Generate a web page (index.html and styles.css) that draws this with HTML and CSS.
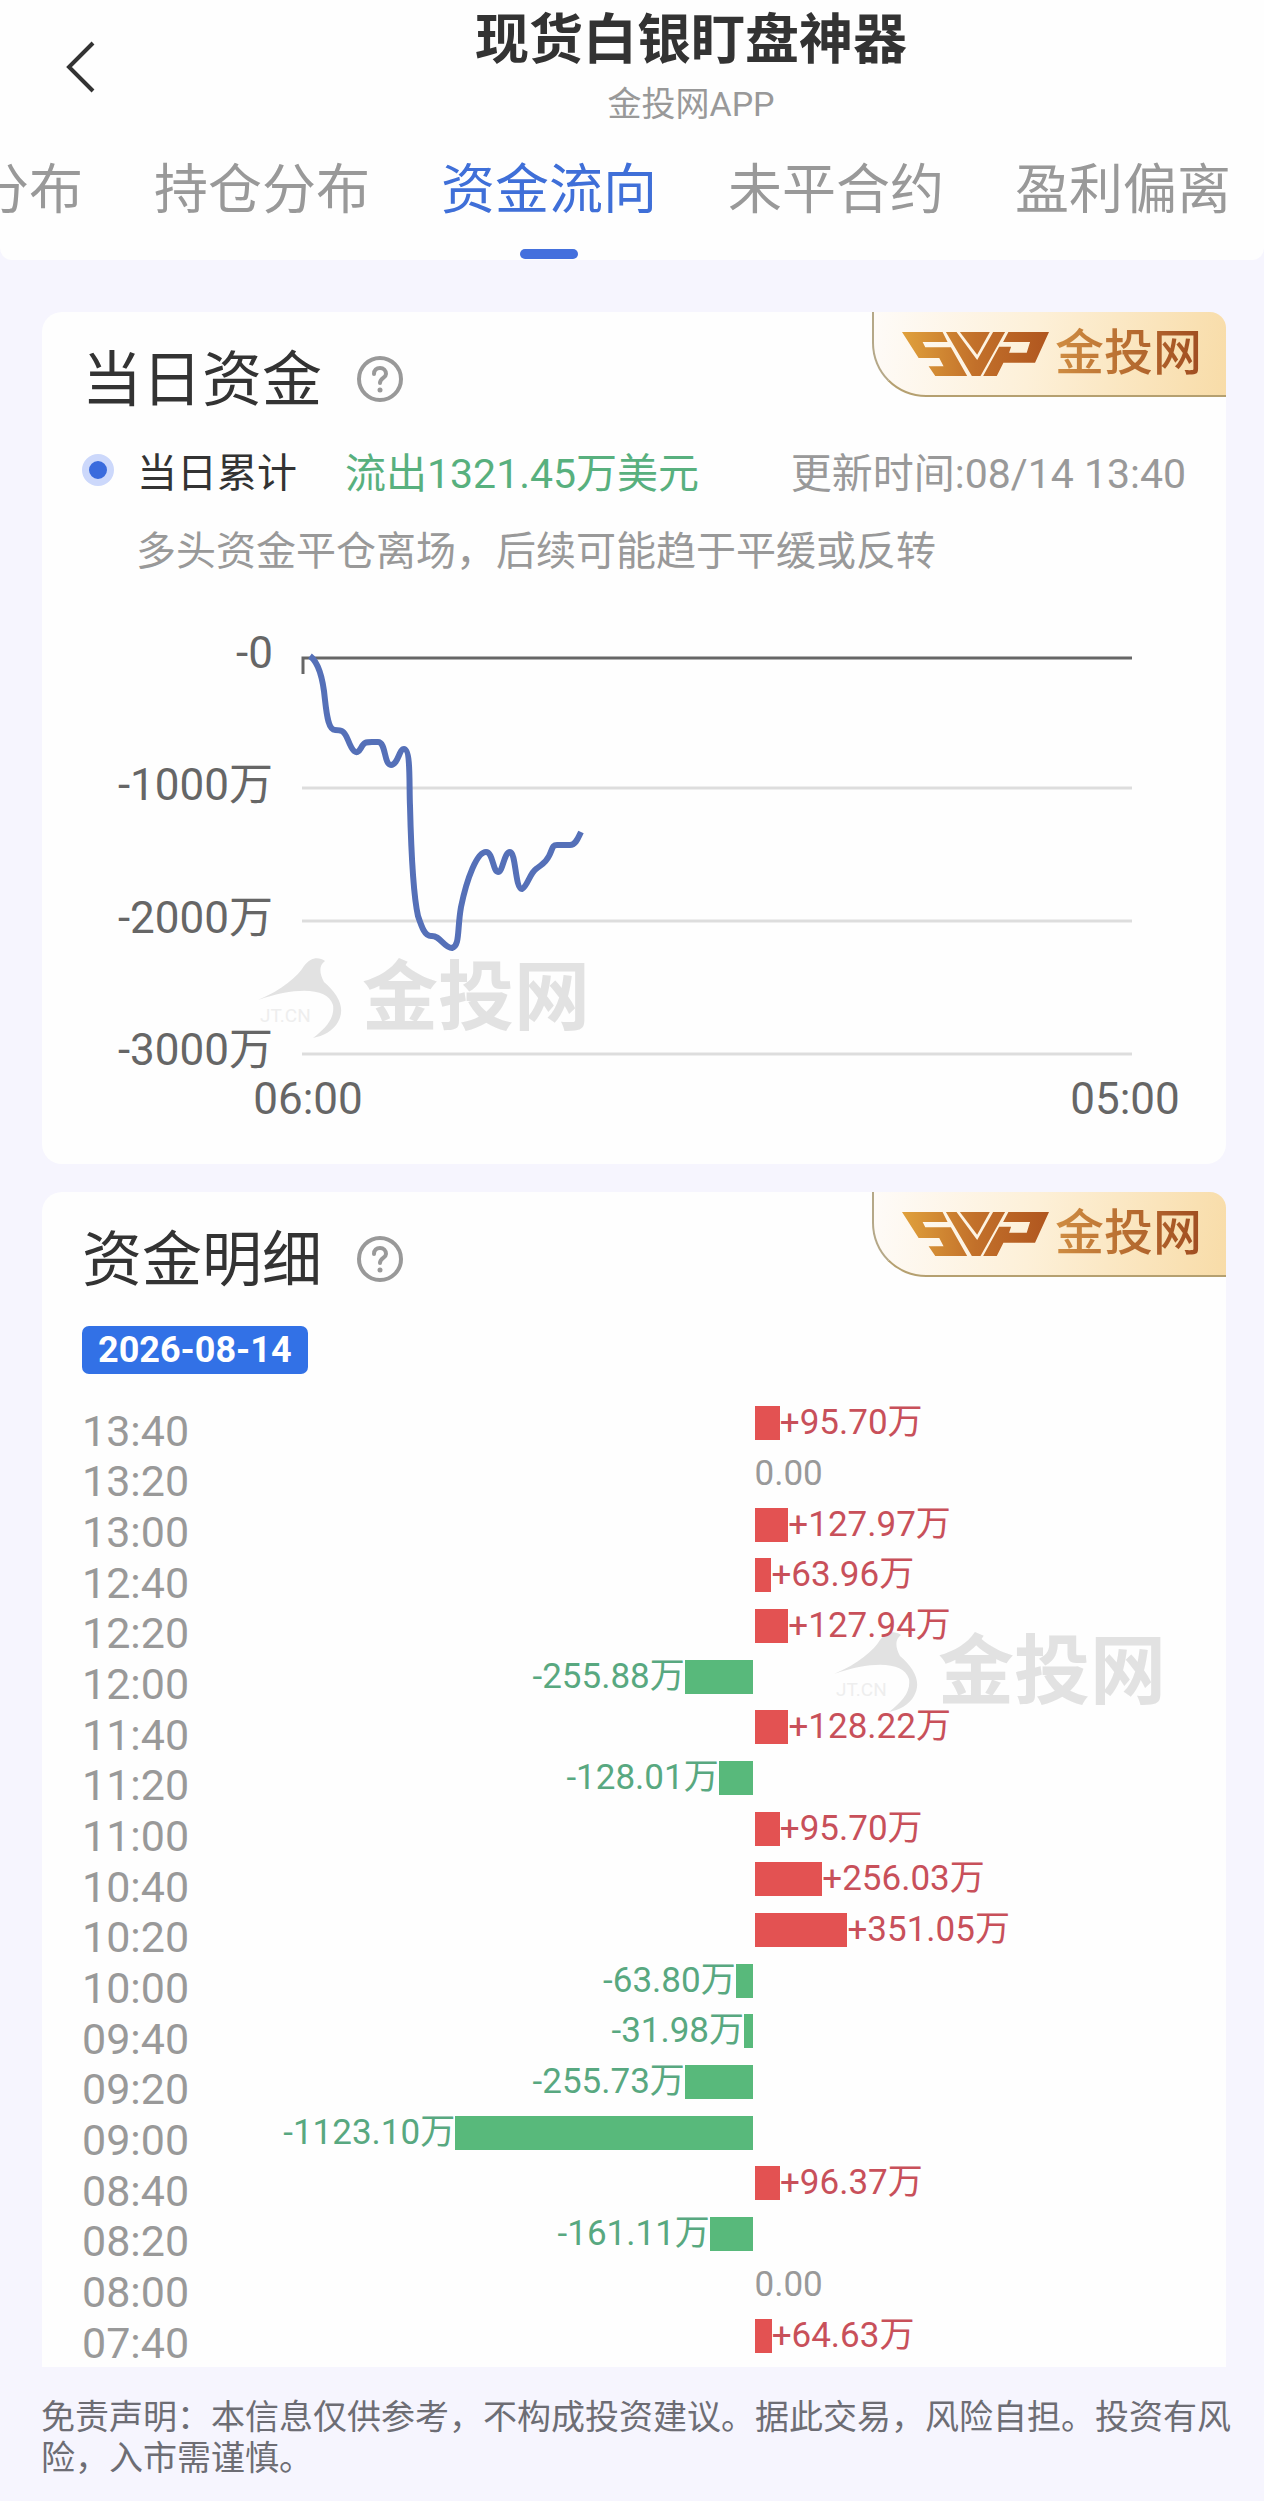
FILE: index.html
```html
<!DOCTYPE html>
<html lang="zh-CN">
<head>
    <meta charset="UTF-8">
    <meta name="viewport" content="width=device-width, initial-scale=1.0">
    <title>现货白银盯盘神器</title>
    <link rel="stylesheet" href="styles.css">
</head>
<body>
    <!-- shared shapes -->
    <svg class="defs" width="0" height="0" aria-hidden="true">
        <defs>
            <linearGradient id="gold" x1="0" y1="0" x2="442" y2="0" gradientUnits="userSpaceOnUse">
                <stop offset="0" stop-color="#e0a13c"/>
                <stop offset="0.5" stop-color="#c2702a"/>
                <stop offset="1" stop-color="#b0561f"/>
            </linearGradient>
            <symbol id="wing" viewBox="0 0 442 132">
                <g fill="url(#gold)">
                    <path d="M0 0H122L137 30H62L70 46H147L196 132H100L80 103H125L112 78H50Z"/>
                    <path d="M132 0H164L226 84L274 0H310L236 132H210Z"/>
                    <path d="M174 0H264L226 68Z"/>
                    <path d="M320 0H442L400 92H305L285 132H244L292 44H328L322 62H375L385 30H304Z"/>
                </g>
            </symbol>
            <symbol id="help" viewBox="0 0 48 48">
                <circle cx="24" cy="24" r="21" fill="none" stroke="#999" stroke-width="4"/>
                <path d="M18 19C18 15 20.500 13 24 13S30 15.500 30 19C30 23 24 23 24 28" fill="none" stroke="#999" stroke-width="4" stroke-linecap="round"/>
                <circle cx="24" cy="35" r="2.500" fill="#999"/>
            </symbol>
            <symbol id="fish" viewBox="0 0 84 80">
                <path d="M0 42C24 32 40 18 46 8C52 0 60 -2 67 3C60 8 62 16 66 24C80 36 88 50 80 64C75 73 65 78 55 80C68 70 77 60 75 47C70 30 40 28 0 42Z" fill="#e2e2e2"/>
                <text x="2" y="64" font-size="19" font-weight="400" fill="#eee">JT.CN</text>
            </symbol>
        </defs>
    </svg>

    <header class="header">
        <div class="topbar">
            <button class="back" type="button" aria-label="返回">
                <svg width="32" height="54" viewBox="0 0 32 54">
                    <path d="M29 3L5 27L29 51" fill="none" stroke="#333" stroke-width="4"/>
                </svg>
            </button>
            <div class="heading">
                <h1>现货白银盯盘神器</h1>
                <p>金投网APP</p>
            </div>
        </div>
        <nav class="tabs">
            <a href="#">分布</a>
            <a href="#">持仓分布</a>
            <a href="#" class="active">资金流向</a>
            <a href="#">未平合约</a>
            <a href="#">盈利偏离</a>
        </nav>
    </header>

    <main>
        <section class="card">
            <div class="brand">
                <svg width="147" height="44" aria-hidden="true"><use href="#wing"/></svg>
                <span>金投网</span>
            </div>
            <div class="card_title">
                <h2>当日资金</h2>
                <button type="button" aria-label="说明"><svg width="48" height="48"><use href="#help"/></svg></button>
            </div>
            <div class="summary">
                <i class="dot"></i>
                <span class="name">当日累计</span>
                <span class="total">流出1321.45万美元</span>
                <span class="time">更新时间:08/14 13:40</span>
            </div>
            <p class="tip">多头资金平仓离场，后续可能趋于平缓或反转</p>
            <div class="watermark mark_chart">
                <svg width="84" height="80" aria-hidden="true"><use href="#fish"/></svg>
                <span>金投网</span>
            </div>
            <svg class="chart" viewBox="0 0 1104 500">
                <g stroke="#ddd" stroke-width="3">
                    <path d="M220 162H1050"/>
                    <path d="M220 295H1050"/>
                    <path d="M220 428H1050"/>
                </g>
                <path d="M221 48V32H1050" fill="none" stroke="#666" stroke-width="3"/>
                <g class="axis" text-anchor="end">
                    <text x="191" y="42">-0</text>
                    <text x="191" y="174">-1000万</text>
                    <text x="191" y="307">-2000万</text>
                    <text x="191" y="439">-3000万</text>
                </g>
                <g class="axis" text-anchor="middle">
                    <text x="226" y="488">06:00</text>
                    <text x="1043" y="488">05:00</text>
                </g>
                <path class="line" d="M228 30C236 36 241 52 243 74C245 92 247 104 253 104C259 104 262 104 266 114C270 124 274 131 279 122C282 116 284 116 290 116H296C304 116 302 139 309 139C316 139 317 123 322 123C329 123 327 160 328 180C329 220 331 268 336 290C340 302 343 310 349 310C358 309 362 322 370 322C378 320 375 304 379 281C385 252 395 226 404 226C411 226 411 246 416 246C421 246 422 226 428 226C434 226 433 263 440 263C445 261 448 247 454 243C460 238 463 238 467 230C471 222 470 219 475 219H488C494 219 496 212 499 206"/>
            </svg>
        </section>

        <section class="card detail">
            <div class="brand">
                <svg width="147" height="44" aria-hidden="true"><use href="#wing"/></svg>
                <span>金投网</span>
            </div>
            <div class="card_title">
                <h2>资金明细</h2>
                <button type="button" aria-label="说明"><svg width="48" height="48"><use href="#help"/></svg></button>
            </div>
            <time class="date" datetime="2026-08-14">2026-08-14</time>
            <div class="watermark mark_detail">
                <svg width="84" height="80" aria-hidden="true"><use href="#fish"/></svg>
                <span>金投网</span>
            </div>
            <table class="flow">
                <tbody id="flow"></tbody>
            </table>
        </section>
    </main>

    <footer class="disclaimer">免责声明：本信息仅供参考，不构成投资建议。据此交易，风险自担。投资有风险，入市需谨慎。</footer>

    <script>
        const rows = [
            ["13:40", 95.70],
            ["13:20", 0],
            ["13:00", 127.97],
            ["12:40", 63.96],
            ["12:20", 127.94],
            ["12:00", -255.88],
            ["11:40", 128.22],
            ["11:20", -128.01],
            ["11:00", 95.70],
            ["10:40", 256.03],
            ["10:20", 351.05],
            ["10:00", -63.80],
            ["09:40", -31.98],
            ["09:20", -255.73],
            ["09:00", -1123.10],
            ["08:40", 96.37],
            ["08:20", -161.11],
            ["08:00", 0],
            ["07:40", 64.63]
        ]

        // value that would fill one half of the plot
        const full = 1630

        function bar(value){
            const width = (Math.abs(value) / full * 100).toFixed(2)
            return `<i style="width: ${width}%"></i>`
        }

        document.getElementById("flow").innerHTML = rows.map(([time, value]) => {
            let out = ""
            let into = ""
            if (value < 0) {
                out = `<div class="bar out"><span>${value.toFixed(2)}万</span>${bar(value)}</div>`
            } else if (value > 0) {
                into = `<div class="bar in">${bar(value)}<span>+${value.toFixed(2)}万</span></div>`
            } else {
                into = `<div class="bar zero"><span>0.00</span></div>`
            }
            return `<tr><th scope="row">${time}</th><td>${out}</td><td>${into}</td></tr>`
        }).join("")
    </script>
</body>
</html>
```

FILE: styles.css
```css
*{
    margin: 0;
    padding: 0;
    box-sizing: border-box;
}

body{
    background-color: #f6f5fe;
    color: #333;
    font-family: Roboto, "Noto Sans CJK SC", sans-serif;
    overflow-x: hidden;
}

button{
    border: none;
    background: none;
    cursor: pointer;
}

a{
    color: inherit;
    text-decoration: none;
}

svg{
    display: block;
}

.defs{
    position: absolute;
}

/* header */
.header{
    background-color: #fefefe;
    border-radius: 0 0 12px 12px;
    overflow: hidden;
}

.topbar{
    display: flex;
    align-items: center;
    height: 134px;
}

.back{
    width: 118px;
    padding-left: 64px;
}

.heading{
    flex: 1;
    text-align: center;
}

.heading h1{
    padding-top: 2px;
    font-size: 54px;
    font-weight: 700;
    line-height: 72px;
}

.heading p{
    font-size: 34px;
    line-height: 54px;
    color: #999;
}

.tabs{
    display: flex;
    gap: 71px;
    margin-left: -25px;
    color: #999;
    font-size: 54px;
    line-height: 80px;
    white-space: nowrap;
}

.tabs a{
    flex: none;
    display: flex;
    flex-direction: column;
    align-items: center;
    height: 126px;
    padding-top: 17px;
}

.tabs .active{
    color: #3f6fd8;
}

.tabs .active::after{
    content: "";
    width: 58px;
    height: 10px;
    margin-top: 18px;
    border-radius: 5px;
    background-color: #4470dd;
}

/* cards */
main{
    padding: 52px 38px 0 42px;
}

.card{
    position: relative;
    padding: 32px 40px 38px;
    margin-bottom: 28px;
    border-radius: 20px;
    background-color: #fefefe;
}

.card.detail{
    padding-bottom: 6px;
    margin-bottom: 0;
    border-radius: 20px 20px 0 0;
}

.card_title{
    display: flex;
    align-items: center;
    gap: 34px;
    height: 70px;
}

.card_title h2{
    padding-top: 4px;
    font-size: 60px;
    font-weight: 400;
    line-height: 70px;
}

.brand{
    position: absolute;
    top: 0;
    right: 0;
    width: 354px;
    height: 85px;
    display: flex;
    align-items: center;
    gap: 6px;
    padding-left: 28px;
    border-left: 2px solid #b5a888;
    border-bottom: 2px solid #b5a070;
    border-radius: 0 16px 0 54px;
    background: linear-gradient(100deg, #fefbf8 0%, #fdf0d8 45%, #f8dca8 100%);
}

.brand span{
    font-size: 49px;
    font-weight: 500;
    line-height: 60px;
    color: transparent;
    background: linear-gradient(90deg, #cf8d42, #a04d20);
    background-clip: text;
    -webkit-background-clip: text;
}

.summary{
    display: flex;
    align-items: center;
    height: 60px;
    margin-top: 26px;
    font-size: 41px;
    white-space: nowrap;
}

.dot{
    width: 32px;
    height: 32px;
    margin-right: 23px;
    border: 7px solid #ccd8fb;
    border-radius: 50%;
    background-color: #3a6bdd;
}

.summary .name{
    font-size: 40px;
}

.summary .total{
    margin-left: 48px;
    color: #58b07e;
}

.summary .time{
    margin-left: auto;
    color: #999;
}

.tip{
    padding-left: 54px;
    margin-top: 22px;
    font-size: 40px;
    line-height: 60px;
    color: #999;
}

.chart{
    position: relative;
    width: 100%;
    margin-top: 44px;
}

.axis{
    font-size: 44px;
    fill: #666;
}

.line{
    fill: none;
    stroke: #5570b8;
    stroke-width: 6;
    stroke-linejoin: round;
}

/* watermark lies under the figures */
.watermark{
    position: absolute;
    display: flex;
    align-items: center;
    gap: 20px;
    color: #e2e2e2;
    font-size: 76px;
    font-weight: 700;
    line-height: 80px;
}

.mark_chart{
    left: 216px;
    bottom: 126px;
}

.mark_detail{
    right: 60px;
    top: 440px;
}

/* detail */
.date{
    display: inline-block;
    margin-top: 32px;
    padding: 0 16px;
    border-radius: 7px;
    background-color: #3271e6;
    color: #fff;
    font-size: 36px;
    font-weight: 700;
    line-height: 48px;
}

.flow{
    position: relative;
    width: 100%;
    height: 963px;
    margin-top: 24px;
    border-collapse: collapse;
    table-layout: fixed;
}

.flow th{
    width: 237px;
    padding-top: 10px;
    color: #999;
    font-size: 43px;
    font-weight: 400;
    line-height: 36px;
    text-align: left;
    vertical-align: bottom;
}

.flow td{
    padding-left: 2px;
}

.bar{
    display: flex;
    align-items: center;
    height: 34px;
    font-size: 35px;
    line-height: 34px;
    white-space: nowrap;
}

.bar i{
    flex: none;
    height: 34px;
}

.bar.out{
    justify-content: flex-end;
    color: #58a880;
}

.bar.out i{
    background-color: #58b97b;
}

.bar.in{
    color: #c8505a;
}

.bar.in i{
    background-color: #e35252;
}

.bar.zero{
    color: #999;
}

/* footer */
.disclaimer{
    padding: 30px 20px 21px 41px;
    color: #6d6d74;
    font-size: 34px;
    line-height: 41px;
}
```
